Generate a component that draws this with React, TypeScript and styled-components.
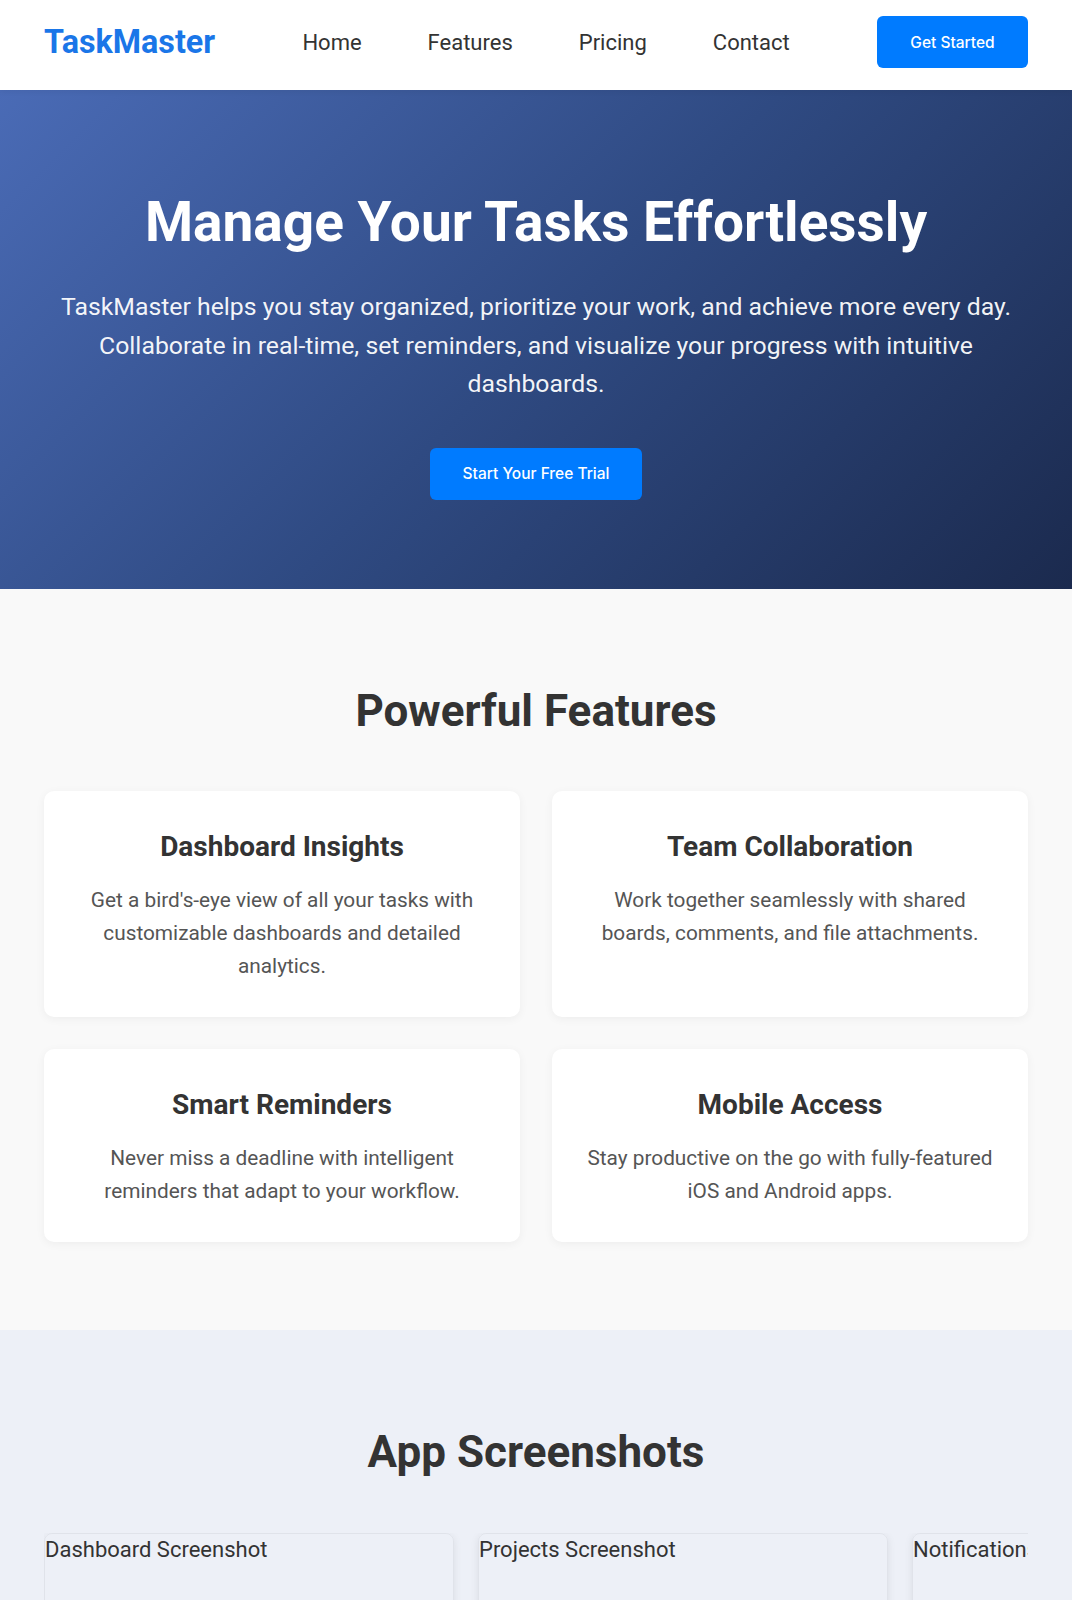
import styled, { createGlobalStyle } from 'styled-components';

const GlobalStyle = createGlobalStyle`
  * {
    box-sizing: border-box;
  }
  body {
    margin: 0;
    font-family: Roboto, "Liberation Sans", Arial, sans-serif;
    color: #333;
    background: #fff;
  }
`;

const features = [
  {
    title: 'Dashboard Insights',
    text: "Get a bird's-eye view of all your tasks with customizable dashboards and detailed analytics.",
  },
  {
    title: 'Team Collaboration',
    text: 'Work together seamlessly with shared boards, comments, and file attachments.',
  },
  {
    title: 'Smart Reminders',
    text: 'Never miss a deadline with intelligent reminders that adapt to your workflow.',
  },
  {
    title: 'Mobile Access',
    text: 'Stay productive on the go with fully-featured iOS and Android apps.',
  },
];

const screenshots = ['Dashboard Screenshot', 'Projects Screenshot', 'Notifications Screenshot'];

export default function App() {
  return (
    <>
      <GlobalStyle />
      <Header>
        <Logo>TaskMaster</Logo>
        <NavLinks>
          <NavLink href="#">Home</NavLink>
          <NavLink href="#">Features</NavLink>
          <NavLink href="#">Pricing</NavLink>
          <NavLink href="#">Contact</NavLink>
        </NavLinks>
        <PrimaryButton $size="nav">Get Started</PrimaryButton>
      </Header>

      <Hero>
        <HeroTitle>Manage Your Tasks Effortlessly</HeroTitle>
        <HeroText>
          TaskMaster helps you stay organized, prioritize your work, and achieve more every day.
          Collaborate in real-time, set reminders, and visualize your progress with intuitive
          dashboards.
        </HeroText>
        <PrimaryButton $size="hero">Start Your Free Trial</PrimaryButton>
      </Hero>

      <Section $bg="#f9f9f9">
        <SectionTitle>Powerful Features</SectionTitle>
        <FeatureGrid>
          {features.map((f) => (
            <FeatureCard key={f.title}>
              <FeatureTitle>{f.title}</FeatureTitle>
              <FeatureText>{f.text}</FeatureText>
            </FeatureCard>
          ))}
        </FeatureGrid>
      </Section>

      <Section $bg="#edf0f7">
        <SectionTitle>App Screenshots</SectionTitle>
        <ShotTrack>
          {screenshots.map((s) => (
            <ShotCard key={s}>{s}</ShotCard>
          ))}
        </ShotTrack>
      </Section>
    </>
  );
}

const Header = styled.header`
  display: flex;
  align-items: center;
  justify-content: space-between;
  padding: 16px 44px 22px;
  background: #fff;
  box-shadow: 0 2px 6px rgba(0, 0, 0, 0.05);
  position: relative;
  z-index: 1;
`;

const Logo = styled.div`
  font-size: 32.3px;
  font-weight: 700;
  color: #1a76e8;
  line-height: 1;
`;

const NavLinks = styled.nav`
  display: flex;
  gap: 66px;
`;

const NavLink = styled.a`
  font-size: 22px;
  color: #333;
  text-decoration: none;
`;

const PrimaryButton = styled.button<{ $size: 'nav' | 'hero' }>`
  border: none;
  border-radius: 6px;
  background: #007bff;
  color: #fff;
  font-family: Inter, "Open Sans", sans-serif;
  font-weight: 500;
  font-size: 15.5px;
  cursor: pointer;
  width: ${(p) => (p.$size === 'nav' ? '151px' : '212px')};
  height: 52px;
`;

const Hero = styled.section`
  display: flex;
  flex-direction: column;
  align-items: center;
  padding: 99px 44px 89px;
  background: linear-gradient(135deg, #4a6bb6 0%, #2f4a82 50%, #1b2a4e 100%);
  color: #fff;
  text-align: center;
`;

const HeroTitle = styled.h1`
  margin: 0;
  font-size: 55px;
  font-weight: 700;
  line-height: 1.2;
`;

const HeroText = styled.p`
  margin: 33px 0 44px;
  font-size: 24.8px;
  line-height: 38.5px;
  color: rgba(255, 255, 255, 0.94);
`;

const Section = styled.section<{ $bg: string }>`
  background: ${(p) => p.$bg};
  padding: 96px 44px 88px;
`;

const SectionTitle = styled.h2`
  margin: 0 0 54px;
  text-align: center;
  font-size: 44px;
  font-weight: 700;
  line-height: 1.2;
  color: #333;
`;

const FeatureGrid = styled.div`
  display: grid;
  grid-template-columns: repeat(2, 1fr);
  gap: 32px;
`;

const FeatureCard = styled.div`
  background: #fff;
  border-radius: 10px;
  padding: 40px 32px 34px;
  text-align: center;
  box-shadow: 0 2px 10px rgba(0, 0, 0, 0.05);
`;

const FeatureTitle = styled.h3`
  margin: 0 0 22px;
  font-size: 28px;
  font-weight: 700;
  line-height: 31px;
  color: #333;
`;

const FeatureText = styled.p`
  margin: 0;
  font-size: 20.8px;
  line-height: 33px;
  color: #555;
`;

const ShotTrack = styled.div`
  display: flex;
  gap: 24px;
  overflow: hidden;
`;

const ShotCard = styled.div`
  flex: 0 0 410px;
  height: 260px;
  border-radius: 8px;
  border: 1px solid rgba(0, 0, 0, 0.05);
  box-shadow: 0 2px 8px rgba(0, 0, 0, 0.08);
  font-size: 22px;
  line-height: 32px;
  color: #333;
  white-space: nowrap;
`;
